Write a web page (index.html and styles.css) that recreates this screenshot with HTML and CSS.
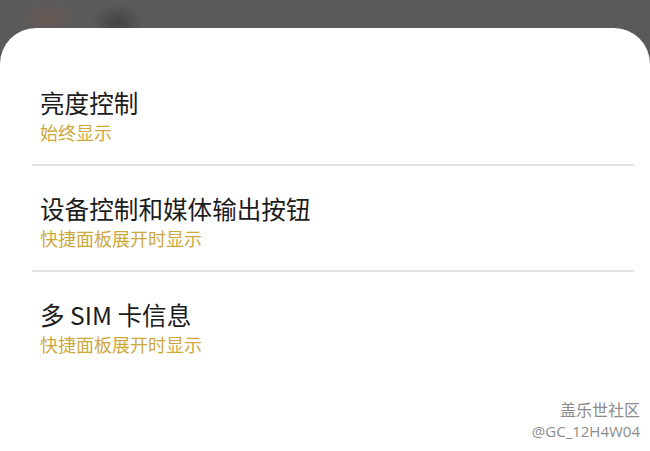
FILE: index.html
```html
<!DOCTYPE html>
<html lang="zh-CN">
<head>
  <meta charset="UTF-8">
  <title>显示设置</title>
  <link rel="stylesheet" href="styles.css">
</head>
<body>

<div class="backdrop"></div>

<div class="sheet">
  <ul class="options">
    <li class="option">
      <div class="option-title">亮度控制</div>
      <div class="option-sub">始终显示</div>
    </li>
    <li class="option">
      <div class="option-title">设备控制和媒体输出按钮</div>
      <div class="option-sub">快捷面板展开时显示</div>
    </li>
    <li class="option">
      <div class="option-title">多 SIM 卡信息</div>
      <div class="option-sub">快捷面板展开时显示</div>
    </li>
  </ul>

  <!-- watermark -->
  <div class="watermark">
    <div class="wm-name">盖乐世社区</div>
    <div class="wm-id">@GC_12H4W04</div>
  </div>
</div>

</body>
</html>
```

FILE: styles.css
```css
html, body {
  margin: 0;
  padding: 0;
  height: 100%;
}
body {
  background-color: #5a5a5a;
  font-family: "Noto Sans CJK SC", "Noto Sans", sans-serif;
  display: flex;
  flex-direction: column;
  overflow: hidden;
}
.backdrop {
  height: 28px;
  flex-shrink: 0;
  background:
    radial-gradient(ellipse 26px 20px at 48px 18px, rgba(130, 85, 75, 0.35), transparent),
    radial-gradient(ellipse 26px 18px at 118px 22px, rgba(40, 40, 40, 0.45), transparent),
    #5a5a5a;
}
.sheet {
  flex: 1;
  position: relative;
  background: #fff;
  border-radius: 36px 36px 0 0;
  padding: 32px 16px 0 32px;
}
.options {
  list-style: none;
  margin: 0;
  padding: 0;
}
.option {
  padding: 25px 0 19px 8px;
  border-bottom: 2px solid #e4e4e4;
}
.option:last-child {
  border-bottom: none;
}
.option-title {
  font-size: 24.6px;
  line-height: 34px;
  color: #1c1c1c;
}
.option-sub {
  font-size: 18px;
  line-height: 26px;
  color: #cda93c;
}
.watermark {
  position: absolute;
  right: 10px;
  bottom: 9px;
  text-align: right;
  color: #8c8c8c;
  text-shadow: 0 0 1px #fff;
}
.wm-name {
  font-size: 16px;
  line-height: 22px;
}
.wm-id {
  font-family: "Open Sans", "Noto Sans", sans-serif;
  font-size: 15px;
  line-height: 22px;
}
```
